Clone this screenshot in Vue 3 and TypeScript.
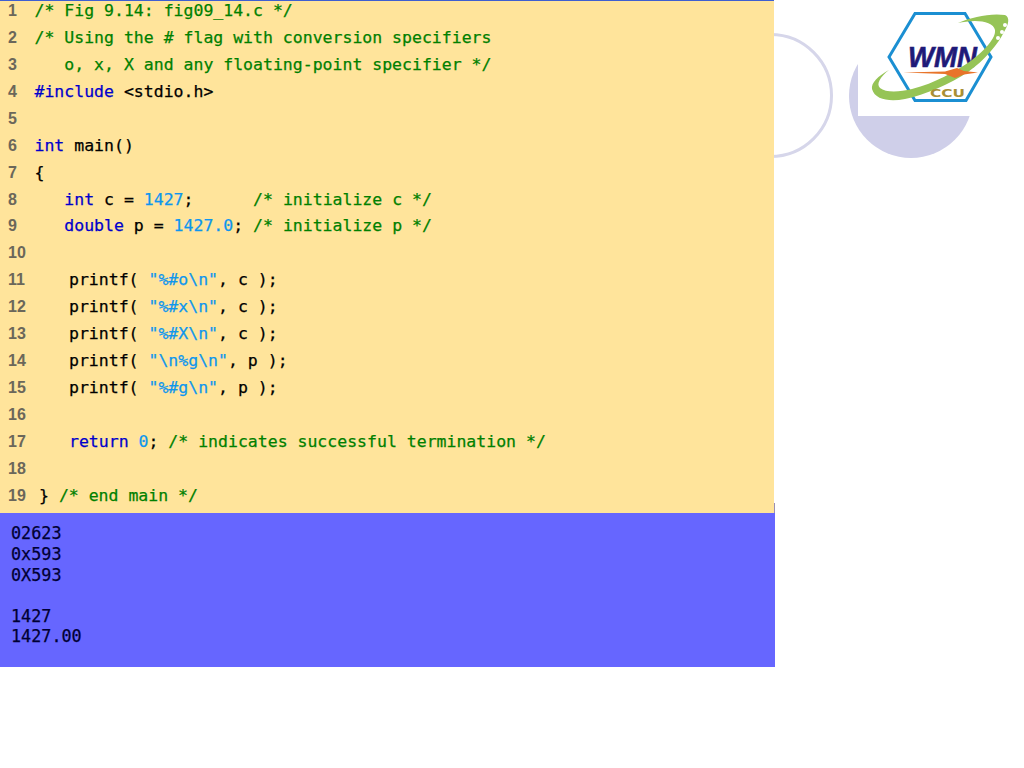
<script setup lang="ts">
type Kind = 'c' | 'k' | 'n' | 't'
interface Seg { k: Kind; s: string }
interface Line { indent?: string; segs: Seg[] }

const lines: Line[] = [
  { segs: [{ k: 'c', s: '/* Fig 9.14: fig09_14.c */' }] },
  { segs: [{ k: 'c', s: '/* Using the # flag with conversion specifiers' }] },
  { segs: [{ k: 'c', s: '   o, x, X and any floating-point specifier */' }] },
  { segs: [{ k: 'k', s: '#include' }, { k: 't', s: ' <stdio.h>' }] },
  { segs: [] },
  { segs: [{ k: 'k', s: 'int' }, { k: 't', s: ' main()' }] },
  { segs: [{ k: 't', s: '{' }] },
  { segs: [{ k: 't', s: '   ' }, { k: 'k', s: 'int' }, { k: 't', s: ' c = ' }, { k: 'n', s: '1427' }, { k: 't', s: ';      ' }, { k: 'c', s: '/* initialize c */' }] },
  { segs: [{ k: 't', s: '   ' }, { k: 'k', s: 'double' }, { k: 't', s: ' p = ' }, { k: 'n', s: '1427.0' }, { k: 't', s: '; ' }, { k: 'c', s: '/* initialize p */' }] },
  { segs: [] },
  { indent: 'wide', segs: [{ k: 't', s: 'printf( ' }, { k: 'n', s: '"%#o\\n"' }, { k: 't', s: ', c );' }] },
  { indent: 'wide', segs: [{ k: 't', s: 'printf( ' }, { k: 'n', s: '"%#x\\n"' }, { k: 't', s: ', c );' }] },
  { indent: 'wide', segs: [{ k: 't', s: 'printf( ' }, { k: 'n', s: '"%#X\\n"' }, { k: 't', s: ', c );' }] },
  { indent: 'wide', segs: [{ k: 't', s: 'printf( ' }, { k: 'n', s: '"\\n%g\\n"' }, { k: 't', s: ', p );' }] },
  { indent: 'wide', segs: [{ k: 't', s: 'printf( ' }, { k: 'n', s: '"%#g\\n"' }, { k: 't', s: ', p );' }] },
  { segs: [] },
  { indent: 'wide', segs: [{ k: 'k', s: 'return' }, { k: 't', s: ' ' }, { k: 'n', s: '0' }, { k: 't', s: '; ' }, { k: 'c', s: '/* indicates successful termination */' }] },
  { segs: [] },
  { indent: 'slight', segs: [{ k: 't', s: '} ' }, { k: 'c', s: '/* end main */' }] }
]

const output = ['02623', '0x593', '0X593', '', '1427', '1427.00']
</script>

<template>
  <div class="page">
    <div class="ring"></div>
    <div class="disc"></div>
    <div class="disc-mask"></div>
    <svg class="logo" viewBox="860 5 150 100" width="150" height="100" aria-label="WMN CCU">
      <polygon points="889,57 915,13.5 965,13.5 991,57 966,100.5 915,100.5" fill="#fff" stroke="#1b8fd2" stroke-width="3" />
      <text x="908" y="67" class="wmn" textLength="69" lengthAdjust="spacingAndGlyphs">WMN</text>
      <path d="M 958 23 C 972 17 990 13 1005 15 C 1010 17 1009 24 1004 32 C 998 44 985 60 968 72 C 950 84 925 95 905 99 C 890 102 875 100 872 89 C 871 83 878 76 889 70 C 880 77 876 84 880 88 C 886 93 900 92 912 89 C 935 83 955 72 972 60 C 985 50 996 38 995 30 C 994 24 985 21 975 21 C 969 21 963 22 958 23 Z" fill="#96c456" />
      <path d="M 903 72.5 L 945 71.5 L 957 68 L 964 71 L 978 72.5 L 964 74.5 L 955 78 L 945 74 Z" fill="#e8742a" />
      <circle cx="1005" cy="25" r="2" fill="#fff" />
      <circle cx="1002" cy="32" r="2" fill="#fff" />
      <circle cx="998" cy="38" r="2" fill="#fff" />
      <text x="930" y="97" class="ccu" textLength="35" lengthAdjust="spacingAndGlyphs">CCU</text>
    </svg>

    <section class="code">
      <div class="rows">
        <div v-for="(line, i) in lines" :key="i" class="row">
          <span class="num">{{ i + 1 }}</span>
          <span class="src" :class="line.indent">
            <span v-for="(seg, j) in line.segs" :key="j" :class="seg.k">{{ seg.s }}</span>
          </span>
        </div>
      </div>
    </section>

    <section class="out">
      <div v-for="(text, i) in output" :key="i" class="out-line">{{ text }}</div>
    </section>
  </div>
</template>

<style>
html, body { margin: 0; background: #fff; }
</style>

<style scoped>
.page {
  position: relative;
  width: 1024px;
  height: 768px;
  overflow: hidden;
  background: #fff;
}
.ring {
  position: absolute;
  left: 708px;
  top: 33px;
  width: 119px;
  height: 119px;
  border: 3px solid #d6d6ea;
  border-radius: 50%;
}
.disc {
  position: absolute;
  left: 849px;
  top: 34px;
  width: 124px;
  height: 124px;
  border-radius: 50%;
  background: #cfcfe9;
}
.disc-mask {
  position: absolute;
  left: 858px;
  top: 20px;
  width: 130px;
  height: 96px;
  background: #fff;
}
.logo {
  position: absolute;
  left: 860px;
  top: 5px;
}
.wmn {
  font-family: "Liberation Sans", sans-serif;
  font-weight: 700;
  font-style: italic;
  font-size: 29px;
  fill: #1f1a78;
  stroke: #1f1a78;
  stroke-width: 0.6px;
}
.ccu {
  font-family: "DejaVu Sans", sans-serif;
  font-weight: 700;
  font-size: 10px;
  fill: #a98f34;
}
.code {
  position: relative;
  width: 774px;
  height: 513px;
  box-sizing: border-box;
  background: #ffe49b;
  border-top: 1px solid #3f5fd0;
  overflow: hidden;
}
.rows {
  display: flex;
  flex-direction: column;
  margin-top: -4px;
}
.row {
  display: flex;
  height: 26.94px;
  flex: none;
  align-items: center;
}
.num {
  width: 35px;
  box-sizing: border-box;
  margin-top: 1px;
  padding-left: 8px;
  flex: none;
  font: 700 16px "Liberation Sans", sans-serif;
  color: #6b675a;
}
.src {
  margin-left: -0.5px;
  font: 16.5px "DejaVu Sans Mono", monospace;
  white-space: pre;
  color: #000;
  -webkit-text-stroke: 0.25px currentColor;
}
.src.wide { padding-left: 34.5px; }
.src.slight { padding-left: 4.5px; }
.c { color: #008000; }
.k { color: #0000cc; }
.n { color: #0e96ee; }
.t { color: #000; }
.out {
  position: relative;
  width: 775px;
  height: 154px;
  box-sizing: border-box;
  padding-top: 10.4px;
  padding-left: 11px;
  background: #6666ff;
}
.out::before {
  content: "";
  position: absolute;
  right: 0;
  top: -10px;
  width: 1px;
  height: 10px;
  background: #9a8fb5;
}
.out-line {
  height: 20.6px;
  font: 16.8px/20.6px "DejaVu Sans Mono", monospace;
  color: #000033;
  white-space: pre;
  -webkit-text-stroke: 0.25px currentColor;
}
</style>
